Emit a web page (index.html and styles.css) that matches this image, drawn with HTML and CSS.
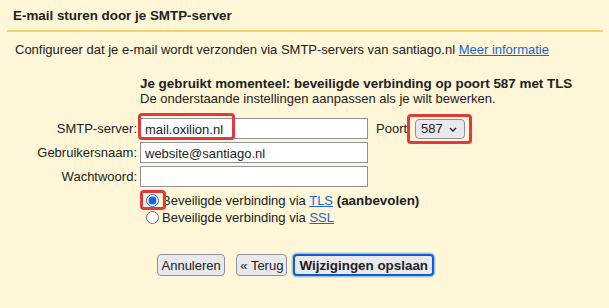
FILE: index.html
```html
<!DOCTYPE html>
<html lang="nl">

<head>
    <meta charset="UTF-8">
    <meta name="viewport"
          content="width=device-width, initial-scale=1.0">
    <title>SMTP-server</title>
    <link rel="stylesheet" href="styles.css">
</head>

<body>
    <div class="header">E-mail sturen door je SMTP-server</div>

    <div class="intro">
        Configureer dat je e-mail wordt verzonden via SMTP-servers van santiago.nl
        <a href="#" class="link">Meer informatie</a>
    </div>

    <div class="panel">
        <div class="status">
            <div class="status-title">Je gebruikt momenteel: beveiligde verbinding op poort 587 met TLS</div>
            <div>De onderstaande instellingen aanpassen als je wilt bewerken.</div>
        </div>

        <div class="form">
            <div class="row">
                <label class="label" for="server">SMTP-server:</label>
                <div class="field">
                    <input class="text-input" id="server" type="text" value="mail.oxilion.nl">
                    <span class="mark mark-server"></span>
                </div>
                <span class="port-label">Poort</span>
                <div class="field">
                    <select class="port">
                        <option>587</option>
                        <option>465</option>
                        <option>25</option>
                    </select>
                    <svg class="chevron" width="8" height="5" viewBox="0 0 8 5">
                        <path d="M1 1 L4 4 L7 1" fill="none" stroke="#202124" stroke-width="1.4"/>
                    </svg>
                    <span class="mark mark-port"></span>
                </div>
            </div>
            <div class="row">
                <label class="label" for="user">Gebruikersnaam:</label>
                <input class="text-input" id="user" type="text" value="website@santiago.nl">
            </div>
            <div class="row">
                <label class="label" for="pass">Wachtwoord:</label>
                <input class="text-input" id="pass" type="password">
            </div>
        </div>

        <div class="options">
            <label class="option">
                <span class="field">
                    <input type="radio" name="secure" checked>
                    <span class="mark mark-radio"></span>
                </span>
                <span>Beveiligde verbinding via <a href="#" class="link">TLS</a> <b class="strong">(aanbevolen)</b></span>
            </label>
            <label class="option">
                <input type="radio" name="secure">
                <span>Beveiligde verbinding via <a href="#" class="link">SSL</a></span>
            </label>
        </div>

        <div class="actions">
            <button class="btn btn-cancel">Annuleren</button>
            <button class="btn btn-back">&laquo; Terug</button>
            <button class="btn btn-save">Wijzigingen opslaan</button>
        </div>
    </div>
</body>

</html>
```

FILE: styles.css
```css
body {
    margin: 0;
    padding: 0;
    width: 100vw;
    height: 100vh;
    overflow: hidden;
    background-color: #fff7d7;
    color: #202124;
    font-family: "Liberation Sans", Arial, sans-serif;
    font-size: 13px;
}

.header {
    margin: 0 6px 0 7px;
    padding: 8px 6px 7px;
    font-size: 13.4px;
    line-height: 15px;
    font-weight: bold;
    border-bottom: 2px solid #f9d266;
}

.intro {
    padding: 10px 15px 0;
    line-height: 16px;
}

.link {
    color: #1a66d2;
}

.panel {
    padding: 18px 0 0 140px;
}

.status {
    line-height: 15px;
}

.status-title,
.strong {
    font-weight: bold;
    font-size: 13.4px;
}

.form {
    margin-top: 12px;
    margin-left: -140px;
    display: flex;
    flex-direction: column;
    gap: 3px;
}

.row {
    display: flex;
    align-items: center;
}

.label {
    width: 137px;
    margin-right: 3px;
    text-align: right;
}

.field {
    position: relative;
    display: flex;
    align-items: center;
}

.text-input {
    box-sizing: border-box;
    width: 228px;
    height: 21px;
    margin: 0;
    padding: 1px 4px 0;
    border: 1px solid #8f8f9d;
    background-color: #fff;
    font-family: inherit;
    font-size: 13px;
    color: #202124;
}

.port-label {
    margin: 0 8px 0 8px;
}

.port {
    box-sizing: border-box;
    width: 50px;
    height: 20px;
    margin: 0;
    padding: 0 0 0 5px;
    border: 1px solid #8f8f9d;
    border-radius: 4px;
    background-color: #e9e9ed;
    font-family: inherit;
    font-size: 13px;
    color: #202124;
    appearance: none;
}

.chevron {
    position: absolute;
    left: 34px;
    top: 8px;
    pointer-events: none;
}

.mark {
    position: absolute;
    border: 3px solid #e0393e;
    border-radius: 4px;
    pointer-events: none;
}

.mark-server {
    left: -2px;
    top: -5px;
    width: 91px;
    height: 21px;
}

.mark-port {
    left: -8px;
    top: -5px;
    width: 59px;
    height: 24px;
}

.mark-radio {
    left: -6px;
    top: -4px;
    width: 20px;
    height: 14px;
}

.options {
    margin: 5px 0 0 6px;
    display: flex;
    flex-direction: column;
    gap: 1px;
}

.option {
    height: 16px;
    display: flex;
    align-items: center;
    gap: 3px;
}

.option input {
    margin: 0;
    width: 13px;
    height: 13px;
    accent-color: #1a66d2;
}

.actions {
    margin: 29px 0 0 17px;
    display: flex;
    align-items: center;
}

.btn {
    box-sizing: border-box;
    height: 22px;
    padding: 0 3.5px;
    border: 1px solid #8f8f9d;
    border-radius: 4px;
    background-color: #e9e9ed;
    font-family: inherit;
    font-size: 13px;
    color: #202124;
}

.btn-back {
    margin-left: 11px;
    padding: 0 3px;
}

.btn-save {
    margin-left: 6px;
    padding: 0 4px;
    font-size: 13.4px;
    font-weight: bold;
    border: 2px solid #0b5ed7;
    box-shadow: 0 0 0 1.5px #aec4dc;
}
```
